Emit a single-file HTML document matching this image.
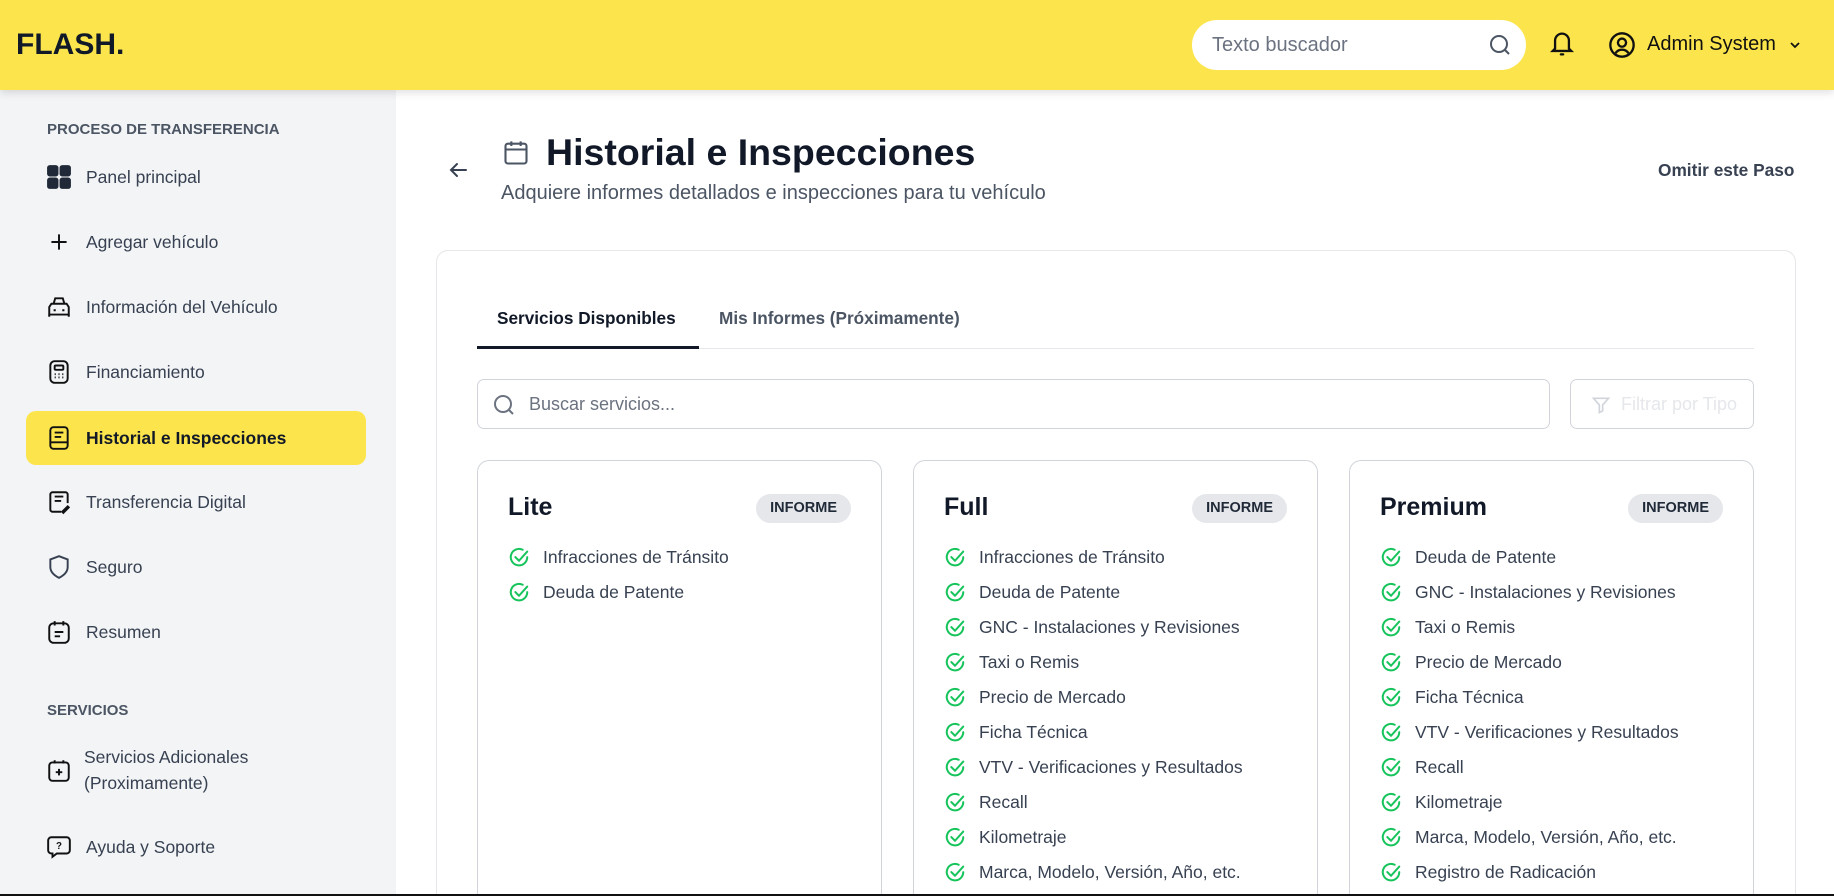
<!DOCTYPE html>
<html><head><meta charset="utf-8"><style>
*{box-sizing:border-box;margin:0;padding:0}
html,body{width:1834px;height:896px;overflow:hidden}
body{background:#fff;font-family:"Liberation Sans",sans-serif;color:#111827}
#wrap{position:relative;width:1834px;height:896px;overflow:hidden}
.abs{position:absolute}
header{position:absolute;left:0;top:0;width:1834px;height:90px;background:#fce54c;box-shadow:0 3px 8px rgba(0,0,0,.12);z-index:2}
.side{position:absolute;left:0;top:90px;width:396px;height:806px;background:#f3f4f6}
.sec{position:absolute;left:47px;font-size:15px;font-weight:bold;color:#4b5563}
.item{position:absolute;left:26px;width:340px;height:54px;display:flex;align-items:center;font-size:17.5px;color:#374151}
.item svg{position:absolute;left:20px;width:26px;height:26px}
.item span{position:absolute;left:60px}
.item.act{background:#fce54c;border-radius:10px;font-weight:bold;color:#111827}
.card{position:absolute;top:460px;width:405px;height:436px;border:1.5px solid #d1d5db;border-bottom:none;border-radius:12px 12px 0 0;background:#fff}
.card h3{position:absolute;left:30px;top:32px;font-size:25px;font-weight:bold}
.badge{position:absolute;right:30px;top:33px;height:29px;padding:0 14px;border-radius:15px;background:#e5e7eb;font-size:14.5px;font-weight:bold;line-height:29px;color:#1f2937}
.card ul{position:absolute;left:30px;top:79px;list-style:none}
.card li{height:35px;display:flex;align-items:center;font-size:17.5px;color:#374151}
.card li svg{width:22px;height:22px;margin-right:13px}
</style></head><body><div id="wrap">
<header>
<div class="abs" style="left:16px;top:28px;font-size:30px;font-weight:bold;color:#111827">FLASH.</div>
<div class="abs" style="left:1192px;top:20px;width:334px;height:50px;background:#fff;border-radius:25px">
<span class="abs" style="left:20px;top:14px;font-size:20px;color:#6b7280">Texto buscador</span>
<svg class="abs" style="left:296px;top:13px" width="24" height="24" viewBox="0 0 24 24" fill="none" stroke="#4b5563" stroke-width="2"><circle cx="11" cy="11" r="8"/><path d="M17 17l4 4"/></svg></div>
<svg class="abs" style="left:1548px;top:29px" width="28" height="30" viewBox="0 0 24 26" fill="none" stroke="#111" stroke-width="2" stroke-linecap="round"><path d="M6 17V10a6 6 0 0 1 12 0v7l2 2H4z"/><path d="M11 22h2"/></svg>
<svg class="abs" style="left:1608px;top:31px" width="28" height="28" viewBox="0 0 24 24" fill="none" stroke="#111" stroke-width="2"><circle cx="12" cy="12" r="10"/><circle cx="12" cy="10" r="3.5"/><path d="M6.5 19c1.5-2.5 3.5-3 5.5-3s4 .5 5.5 3"/></svg>
<span class="abs" style="left:1647px;top:33px;font-size:20px;color:#111">Admin System</span>
<svg class="abs" style="left:1788px;top:39px" width="14" height="12" viewBox="0 0 14 12" fill="none" stroke="#111" stroke-width="1.8"><path d="M3 4l4 4 4-4"/></svg>
</header>
<div class="side">
<div class="sec" style="top:31px">PROCESO DE TRANSFERENCIA</div>
<div class="item" style="top:60px"><svg viewBox="0 0 24 24"><rect x="1" y="1" width="10.5" height="10.5" rx="2.5" fill="#1f2937"/><rect x="12.5" y="1" width="10.5" height="10.5" rx="2.5" fill="#1f2937"/><rect x="1" y="12.5" width="10.5" height="10.5" rx="2.5" fill="#1f2937"/><rect x="12.5" y="12.5" width="10.5" height="10.5" rx="2.5" fill="#1f2937"/></svg><span>Panel principal</span></div>
<div class="item" style="top:125px"><svg viewBox="0 0 24 24" fill="none" stroke="#111" stroke-width="1.8"><path d="M12 5v14M5 12h14"/></svg><span>Agregar vehículo</span></div>
<div class="item" style="top:190px"><svg viewBox="0 0 24 24" fill="none" stroke="#111" stroke-width="1.8"><path d="M7 9l1.5-5h7L17 9M3 12l2-3h14l2 3v7H3z"/><path d="M7 15h2M15 15h2M3 19v2M21 19v2"/></svg><span>Información del Vehículo</span></div>
<div class="item" style="top:255px"><svg viewBox="0 0 24 24" fill="none" stroke="#111" stroke-width="1.8"><rect x="4" y="2" width="16" height="20" rx="4"/><rect x="8" y="6" width="8" height="4" rx="1"/><path d="M8 14h1M11.5 14h1M15 14h1M8 17h1M11.5 17h1M15 17h1"/></svg><span>Financiamiento</span></div>
<div class="item act" style="top:321px"><svg viewBox="0 0 24 24" fill="none" stroke="#111" stroke-width="1.8"><rect x="4" y="2" width="16" height="20" rx="3"/><path d="M8 7h8M8 11h6M4 16h16"/></svg><span>Historial e Inspecciones</span></div>
<div class="item" style="top:385px"><svg viewBox="0 0 24 24" fill="none" stroke="#111" stroke-width="1.8"><path d="M14 21H6a2 2 0 0 1-2-2V5a2 2 0 0 1 2-2h12a2 2 0 0 1 2 2v8"/><path d="M8 7h8M8 11h6M15 21l5-5 1 1-5 5z"/></svg><span>Transferencia Digital</span></div>
<div class="item" style="top:450px"><svg viewBox="0 0 24 24" fill="none" stroke="#374151" stroke-width="1.8"><path d="M12 2l8 3v7c0 5-4 8-8 10-4-2-8-5-8-10V5z"/></svg><span>Seguro</span></div>
<div class="item" style="top:515px"><svg viewBox="0 0 24 24" fill="none" stroke="#111" stroke-width="1.8"><rect x="3" y="4" width="18" height="18" rx="4"/><path d="M8 2v4M16 2v4M8 12h8M8 16h5"/></svg><span>Resumen</span></div>
<div class="sec" style="top:612px">SERVICIOS</div>
<div class="item" style="top:653px;height:54px"><svg viewBox="0 0 24 24" fill="none" stroke="#111" stroke-width="1.8"><rect x="3" y="5" width="18" height="17" rx="3"/><path d="M8 3v3M16 3v3M12 11v6M9 14h6"/></svg><span style="left:58px;line-height:26px">Servicios Adicionales<br>(Proximamente)</span></div>
<div class="item" style="top:730px"><svg viewBox="0 0 24 24" fill="none" stroke="#111" stroke-width="1.8"><path d="M5 3h14a3 3 0 0 1 3 3v9a3 3 0 0 1-3 3h-9l-4 3v-3H5a3 3 0 0 1-3-3V6a3 3 0 0 1 3-3z"/><text x="12" y="14" font-size="9" text-anchor="middle" fill="#111" stroke="none" font-weight="bold" font-family="Liberation Sans">?</text></svg><span>Ayuda y Soporte</span></div>
</div>
<svg class="abs" style="left:446px;top:158px" width="24" height="24" viewBox="0 0 24 24" fill="none" stroke="#374151" stroke-width="2" stroke-linecap="round"><path d="M20 12H5M11 6l-6 6 6 6"/></svg>
<svg class="abs" style="left:502px;top:139px" width="28" height="28" viewBox="0 0 24 24" fill="none" stroke="#4b5563" stroke-width="1.8"><rect x="3" y="4" width="18" height="17" rx="2"/><path d="M3 9h18M8 2v4M16 2v4"/></svg>
<div class="abs" style="left:546px;top:131px;font-size:37.5px;font-weight:bold;color:#111827">Historial e Inspecciones</div>
<div class="abs" style="left:501px;top:182px;font-size:20px;color:#4b5563">Adquiere informes detallados e inspecciones para tu vehículo</div>
<div class="abs" style="left:1658px;top:160px;font-size:17.3px;font-weight:bold;color:#374151">Omitir este Paso</div>
<div class="abs" style="left:436px;top:250px;width:1360px;height:646px;border:1.5px solid #e5e7eb;border-bottom:none;border-radius:12px 12px 0 0"></div>
<div class="abs" style="left:497px;top:308px;font-size:17.2px;font-weight:bold;color:#111827">Servicios Disponibles</div>
<div class="abs" style="left:719px;top:308px;font-size:17.2px;font-weight:bold;color:#4b5563">Mis Informes (Próximamente)</div>
<div class="abs" style="left:477px;top:348px;width:1277px;height:1px;background:#e5e7eb"></div>
<div class="abs" style="left:477px;top:346px;width:222px;height:3px;background:#111827"></div>
<div class="abs" style="left:477px;top:379px;width:1073px;height:50px;border:1.5px solid #d1d5db;border-radius:7px">
<svg class="abs" style="left:14px;top:13px" width="24" height="24" viewBox="0 0 24 24" fill="none" stroke="#6b7280" stroke-width="2"><circle cx="11" cy="11" r="8"/><path d="M17 17l4 4"/></svg>
<span class="abs" style="left:51px;top:14px;font-size:18px;color:#6b7280">Buscar servicios...</span></div>
<div class="abs" style="left:1570px;top:379px;width:184px;height:50px;border:1.5px solid #d1d5db;border-radius:7px">
<svg class="abs" style="left:20px;top:15px" width="20" height="20" viewBox="0 0 24 24" fill="none" stroke="#d1d5db" stroke-width="2"><path d="M3 4h18l-7 8v7l-4 2v-9z"/></svg>
<span class="abs" style="left:50px;top:14px;font-size:18px;color:#e5e7eb">Filtrar por Tipo</span></div>
<svg width="0" height="0" style="position:absolute"><defs><symbol id="ck" viewBox="0 0 24 24"><path d="M21 11a9 9 0 1 1-5-8" fill="none" stroke="#16c45b" stroke-width="2.2" stroke-linecap="round"/><path d="M8 11l4 4 9-10" fill="none" stroke="#16c45b" stroke-width="2.2" stroke-linecap="round" stroke-linejoin="round"/></symbol></defs></svg>
<div class="card" style="left:477px"><h3>Lite</h3><div class="badge">INFORME</div><ul>
<li><svg><use href="#ck"/></svg>Infracciones de Tránsito</li>
<li><svg><use href="#ck"/></svg>Deuda de Patente</li></ul></div>
<div class="card" style="left:913px"><h3>Full</h3><div class="badge">INFORME</div><ul>
<li><svg><use href="#ck"/></svg>Infracciones de Tránsito</li>
<li><svg><use href="#ck"/></svg>Deuda de Patente</li>
<li><svg><use href="#ck"/></svg>GNC - Instalaciones y Revisiones</li>
<li><svg><use href="#ck"/></svg>Taxi o Remis</li>
<li><svg><use href="#ck"/></svg>Precio de Mercado</li>
<li><svg><use href="#ck"/></svg>Ficha Técnica</li>
<li><svg><use href="#ck"/></svg>VTV - Verificaciones y Resultados</li>
<li><svg><use href="#ck"/></svg>Recall</li>
<li><svg><use href="#ck"/></svg>Kilometraje</li>
<li><svg><use href="#ck"/></svg>Marca, Modelo, Versión, Año, etc.</li></ul></div>
<div class="card" style="left:1349px"><h3>Premium</h3><div class="badge">INFORME</div><ul>
<li><svg><use href="#ck"/></svg>Deuda de Patente</li>
<li><svg><use href="#ck"/></svg>GNC - Instalaciones y Revisiones</li>
<li><svg><use href="#ck"/></svg>Taxi o Remis</li>
<li><svg><use href="#ck"/></svg>Precio de Mercado</li>
<li><svg><use href="#ck"/></svg>Ficha Técnica</li>
<li><svg><use href="#ck"/></svg>VTV - Verificaciones y Resultados</li>
<li><svg><use href="#ck"/></svg>Recall</li>
<li><svg><use href="#ck"/></svg>Kilometraje</li>
<li><svg><use href="#ck"/></svg>Marca, Modelo, Versión, Año, etc.</li>
<li><svg><use href="#ck"/></svg>Registro de Radicación</li></ul></div>
<div class="abs" style="left:0;top:894px;width:1834px;height:2px;background:#111;z-index:5"></div>
</div></body></html>
